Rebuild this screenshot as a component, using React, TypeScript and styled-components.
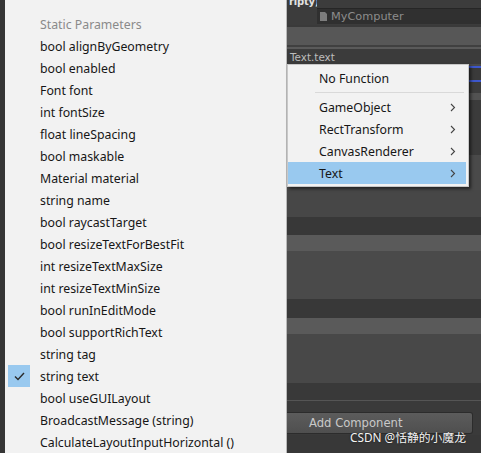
import React from 'react';
import styled, { createGlobalStyle } from 'styled-components';

const GlobalStyle = createGlobalStyle`
  html, body {
    margin: 0;
    padding: 0;
    background: #383838;
  }
  * {
    box-sizing: border-box;
  }
`;

const params = [
  'bool alignByGeometry',
  'bool enabled',
  'Font font',
  'int fontSize',
  'float lineSpacing',
  'bool maskable',
  'Material material',
  'string name',
  'bool raycastTarget',
  'bool resizeTextForBestFit',
  'int resizeTextMaxSize',
  'int resizeTextMinSize',
  'bool runInEditMode',
  'bool supportRichText',
  'string tag',
  'string text',
  'bool useGUILayout',
  'BroadcastMessage (string)',
  'CalculateLayoutInputHorizontal ()',
];

const components = ['GameObject', 'RectTransform', 'CanvasRenderer', 'Text'];

const Page = styled.div`
  display: flex;
  width: 481px;
  height: 453px;
  overflow: hidden;
  background: #383838;
`;

const Gutter = styled.div`
  width: 5px;
  flex: none;
  background: #363636;
`;

const Menu = styled.div`
  width: 282px;
  flex: none;
  display: flex;
  flex-direction: column;
  padding-top: 13px;
  background: #f2f2f2;
  border-right: 1px solid #b9b9b9;
  font-family: 'Noto Sans', sans-serif;
  font-size: 12.3px;
  color: #1b1b1b;
`;

const MenuRow = styled.div<{ $muted?: boolean }>`
  height: 22px;
  flex: none;
  display: flex;
  align-items: center;
  white-space: nowrap;
  color: ${(p) => (p.$muted ? '#8a8a8a' : '#161616')};
`;

const CheckSlot = styled.div<{ $on?: boolean }>`
  width: 22px;
  height: 22px;
  margin-left: 3px;
  margin-right: 10px;
  display: flex;
  align-items: center;
  justify-content: center;
  background: ${(p) => (p.$on ? '#99c9ef' : 'transparent')};
`;

const Inspector = styled.div`
  position: relative;
  flex: 1;
  display: flex;
  flex-direction: column;
  font-family: 'DejaVu Sans', sans-serif;
`;

const Band = styled.div<{ $h: number; $bg: string }>`
  height: ${(p) => p.$h}px;
  flex: none;
  background: ${(p) => p.$bg};
`;

const HeaderRow = styled.div`
  height: 25px;
  flex: none;
  display: flex;
  align-items: flex-start;
  background: #3c3c3c;
`;

const Title = styled.div`
  margin-top: -4px;
  padding-left: 2px;
  width: 30px;
  font-size: 10px;
  font-weight: bold;
  line-height: 12px;
  letter-spacing: -0.2px;
  color: #e2e2e2;
  white-space: nowrap;
  overflow: hidden;
`;

const ObjectField = styled.div`
  flex: 1;
  height: 16px;
  margin-top: 8px;
  display: flex;
  align-items: center;
  gap: 4px;
  padding-left: 3px;
  background: #303030;
  border-top: 1px solid #262626;
  font-size: 11.3px;
  color: #8c8c8c;
`;

const FieldRow = styled.div`
  height: 15px;
  flex: none;
  display: flex;
  align-items: center;
  padding-left: 3px;
  background: #3b3b3b;
  font-size: 10.4px;
  color: #bdbdbd;
`;

const Behind = styled.div`
  height: 126px;
  flex: none;
  display: flex;
  flex-direction: column;
  background: #3c3c3c;
`;

const ButtonRow = styled.div`
  height: 23px;
  flex: none;
  display: flex;
  background: #3a3a3a;
`;

const AddButton = styled.div`
  width: 186px;
  height: 22px;
  display: flex;
  align-items: center;
  padding-left: 22px;
  border: 1px solid #2c2c2c;
  border-left: none;
  border-radius: 0 3px 3px 0;
  background: linear-gradient(#5c5c5c, #4f4f4f);
  font-size: 11.6px;
  color: #c9c9c9;
`;

const Watermark = styled.div`
  position: absolute;
  left: 63px;
  top: 428px;
  font-family: 'Noto Sans', 'Noto Sans CJK SC', sans-serif;
  font-size: 11.8px;
  line-height: 18px;
  color: #f4f4f4;
  text-shadow: 0 0 2px rgba(0, 0, 0, 0.6);
  white-space: nowrap;
`;

const Popup = styled.div`
  position: absolute;
  left: 0;
  top: 64px;
  width: 182px;
  display: flex;
  flex-direction: column;
  padding: 2px 2px 2px 0;
  background: #f2f2f2;
  border: 1px solid #c8c8c8;
  box-shadow: 2px 2px 3px rgba(0, 0, 0, 0.55);
  font-family: 'Noto Sans', sans-serif;
  font-size: 12.3px;
  color: #161616;
`;

const PopupItem = styled.div<{ $active?: boolean }>`
  height: 22px;
  flex: none;
  display: flex;
  align-items: center;
  justify-content: space-between;
  padding: 0 10px 0 31px;
  background: ${(p) => (p.$active ? '#99c9ef' : 'transparent')};
`;

const Separator = styled.div`
  height: 1px;
  margin: 3px 2px 3px 27px;
  background: #d9d9d9;
`;

function Chevron() {
  return (
    <svg width="6" height="9" viewBox="0 0 6 9">
      <path d="M1 1 L4.5 4.5 L1 8" fill="none" stroke="#444" strokeWidth="1.1" />
    </svg>
  );
}

function CheckMark() {
  return (
    <svg width="11" height="9" viewBox="0 0 11 9">
      <path d="M1 4.5 L4 7.5 L10 1" fill="none" stroke="#2a2a2a" strokeWidth="1.4" />
    </svg>
  );
}

function DocIcon() {
  return (
    <svg width="7" height="9" viewBox="0 0 7 9">
      <path d="M0 0 H5 L7 2 V9 H0 Z" fill="#7d7d7d" />
    </svg>
  );
}

export default function App() {
  return (
    <>
      <GlobalStyle />
      <Page>
        <Gutter />
        <Menu>
          <MenuRow $muted>
            <CheckSlot />
            Static Parameters
          </MenuRow>
          {params.map((name) => (
            <MenuRow key={name}>
              <CheckSlot $on={name === 'string text'}>
                {name === 'string text' && <CheckMark />}
              </CheckSlot>
              {name}
            </MenuRow>
          ))}
        </Menu>
        <Inspector>
          <HeaderRow>
            <Title>ripty)</Title>
            <ObjectField>
              <DocIcon />
              MyComputer
            </ObjectField>
          </HeaderRow>
          <Band $h={2} $bg="#3a3a3a" />
          <Band $h={18} $bg="#575757" />
          <Band $h={2} $bg="#404040" />
          <Band $h={2} $bg="#5a5a5a" />
          <FieldRow>Text.text</FieldRow>
          <Behind>
            <Band $h={2} $bg="#4a4a4a" />
            <Band $h={2} $bg="#3d57cc" />
            <Band $h={12} $bg="#3a3a3a" />
            <Band $h={2} $bg="#3d57cc" />
            <Band $h={11} $bg="#3c3c3c" />
            <Band $h={7} $bg="#525252" />
            <Band $h={55} $bg="#3b3b3b" />
            <Band $h={35} $bg="#4a4a4a" />
          </Behind>
          <Band $h={27} $bg="#474747" />
          <Band $h={18} $bg="#383838" />
          <Band $h={16} $bg="#5a5a5a" />
          <Band $h={48} $bg="#4a4a4a" />
          <Band $h={19} $bg="#383838" />
          <Band $h={16} $bg="#5a5a5a" />
          <Band $h={49} $bg="#484848" />
          <Band $h={17} $bg="#393939" />
          <Band $h={1} $bg="#555555" />
          <Band $h={11} $bg="#3a3a3a" />
          <ButtonRow>
            <AddButton>Add Component</AddButton>
          </ButtonRow>
          <Band $h={18} $bg="#383838" />
          <Watermark>CSDN @恬静的小魔龙</Watermark>
          <Popup>
            <PopupItem>No Function</PopupItem>
            <Separator />
            {components.map((c) => (
              <PopupItem key={c} $active={c === 'Text'}>
                {c}
                <Chevron />
              </PopupItem>
            ))}
          </Popup>
        </Inspector>
      </Page>
    </>
  );
}
